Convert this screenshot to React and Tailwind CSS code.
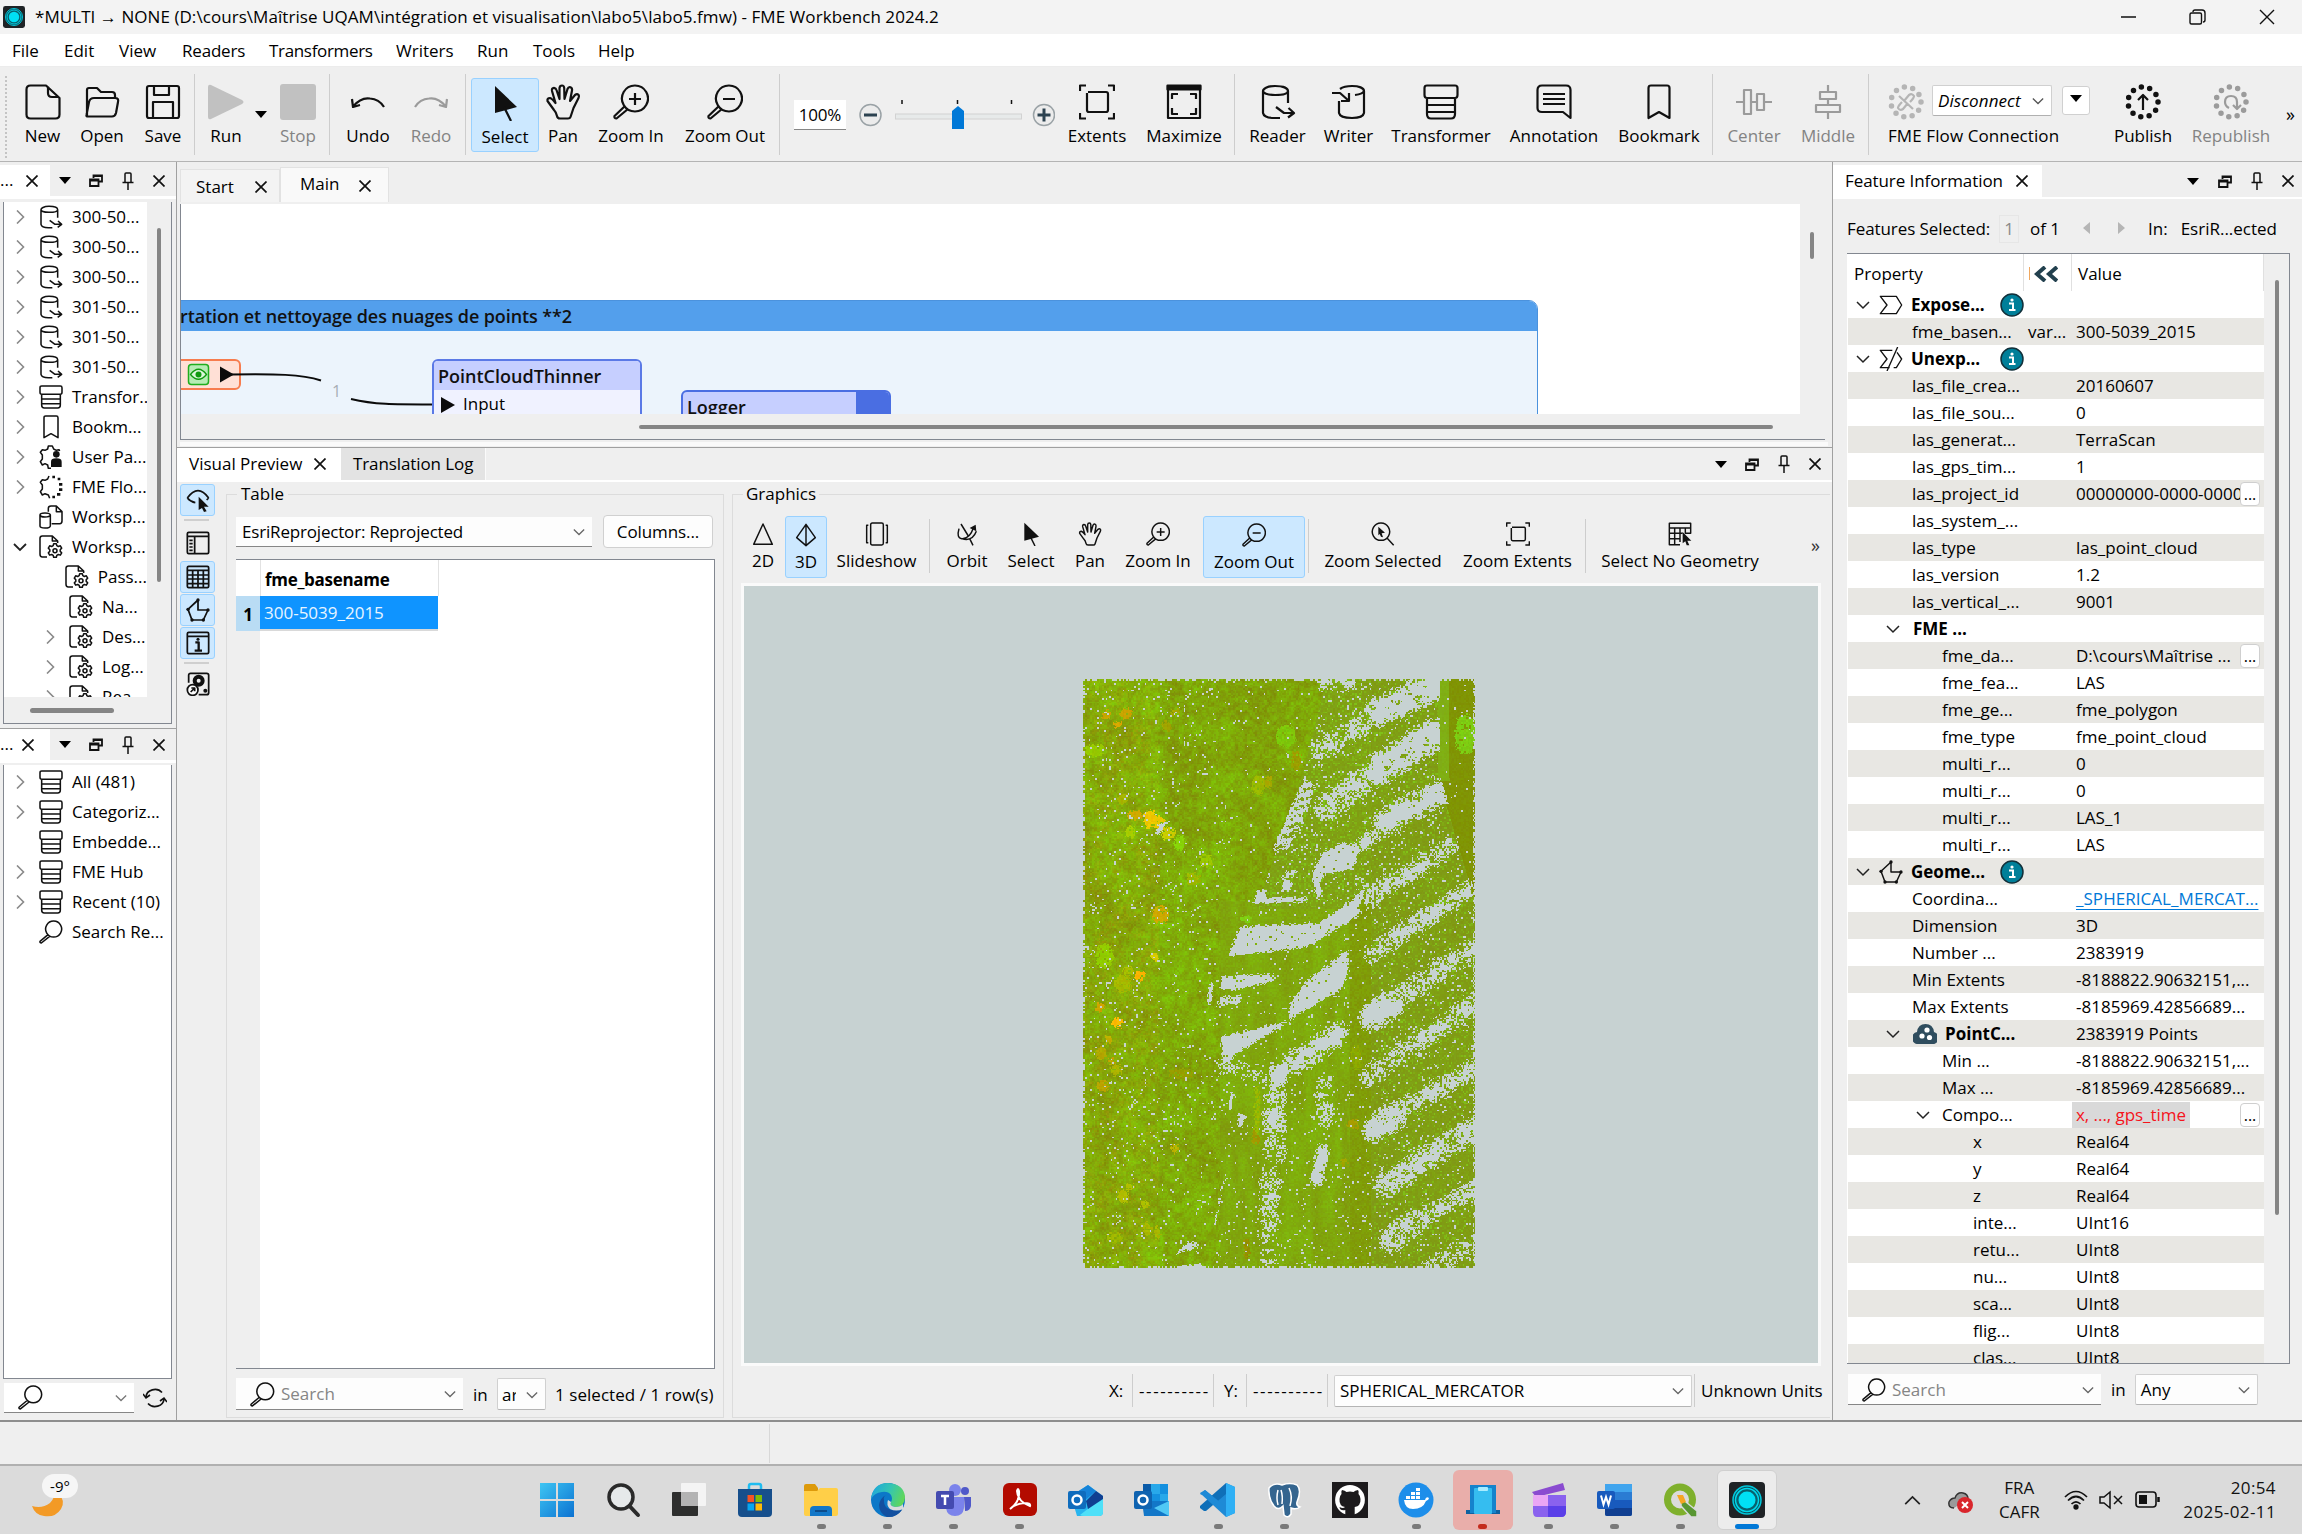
import React, { useEffect, useRef } from "react";

/* ---------- icons ---------- */

const S = ({ size = 36, vb = 36, sw = 2.2, c = "#111", className = "", children }) => (
  <svg
    width={size}
    height={size}
    viewBox={`0 0 ${vb} ${vb}`}
    fill="none"
    stroke={c}
    strokeWidth={sw}
    strokeLinejoin="round"
    strokeLinecap="butt"
    className={"shrink-0 " + className}
  >
    {children}
  </svg>
);

const shapes = {
  new: <path d="M5.500 1.500H21L34.500 14V30.500Q34.500 34.500 30.500 34.500H5.500Q1.500 34.500 1.500 30.500V5.500Q1.500 1.500 5.500 1.500ZM23 2.500V9Q23 13 27 13H34M21 1.500L34.500 14" />,
  open: (
    <path d="M3 32V6Q3 4 5 4H13L17 8H28Q31 8 31 11V14M2.500 31L5 18Q6 14 10 14H31Q35 14 34 18L32 29Q31 32.500 28 32.500H4Q2 32.500 2.500 31Z" />
  ),
  save: <path d="M2 4Q2 2 4 2H32Q34 2 34 4V32Q34 34 32 34H4Q2 34 2 32ZM9 2V11H24V2M8 34V18H28V34" />,
  undo: <path d="M2 15L3 23L10 21M3 22.500Q11 13 20 14.500Q29 15 34 23" />,
  redo: <path d="M34 15L33 23L26 21M33 22.500Q25 13 16 14.500Q7 15 2 23" />,
  select: (
    <g>
      <path d="M8 1L30 22L8 28Z" fill="#111" stroke="none" />
      <path d="M17 22L24 36" />
    </g>
  ),
  pan: (
    <path d="M9 26L2.500 17Q2 14 5 14Q7 14.500 10.500 19L7 7Q6.500 4 9 3.800Q11 4 11.500 6L14.500 15L14.500 4Q14.800 1.500 17 1.500Q19 1.500 19.200 4L19.500 15L22.500 5Q23.500 2.500 25.500 3.200Q27.500 4 27 6.500L25 17L30 11Q32 9.500 33.500 10.800Q34.500 12 33.500 14L28.500 24L25.500 33Q25 34.500 23 34.500H15Q12.500 34.500 12 32Q11 28 9 26Z" />
  ),
  zoomin: (
    <path d="M22 1.500A13 13 0 1 1 21.900 1.500ZM22 9V21M16 15H28M12 22L1.500 32Q1 34.500 3.500 34.500L15 25" />
  ),
  zoomout: <path d="M22 1.500A13 13 0 1 1 21.900 1.500ZM16 15H28M12 22L1.500 32Q1 34.500 3.500 34.500L15 25" />,
  search: <path d="M22 1.500A12 12 0 1 1 21.900 1.500ZM13.500 22L1.500 32Q1 34.500 3.500 34.500L16 24.500" />,
  zoomsel: (
    <g>
      <path d="M15 1.500A13 13 0 1 1 14.900 1.500ZM24 24L34 35" />
      <path d="M11 7L21 16L16 17L18 23L15 22L13 18L11 20Z" fill="#111" stroke="none" />
    </g>
  ),
  extents: <path d="M1 7V1.500H7M29 1.500H35V7M35 29V34.500H29M7 34.500H1V29M9 8H27Q29 8 29 10V26Q29 28 27 28H10Q8 28 8 26V9" />,
  maximize: (
    <g>
      <path d="M2 2H34V34H2ZM6 15V10H12M24 10H30V15M30 24V30H24M12 30H6V24" />
      <path d="M1.500 1.500H34.500V5.500H1.500Z" fill="#111" />
    </g>
  ),
  reader: (
    <g>
      <path d="M15 2C23 2 28 4 28 7S23 11 15 11S3 9 3 7S7 2 15 2ZM3 7V29Q4 34 14 34H20M28 7V19M16 23L24 29H34M28.500 24L34 29L28 33.500" />
    </g>
  ),
  writer: (
    <g>
      <path d="M33 7C33 4 28 2 21 2Q13 2 9 5M33 7V29Q32 34 21 34Q9 34 8 29V17M33 7Q32 10 24 11M1 9H9L18 17M10 17H18V9" />
    </g>
  ),
  transformer: (
    <path d="M4 1.500H32Q34.500 1.500 34.500 4V11Q34.500 14 32 14H4Q1.500 14 1.500 11V4Q1.500 1.500 4 1.500ZM4 14V30Q4 34.500 8 34.500H28Q32 34.500 32 30V14M4 21H32M4 28H32" />
  ),
  annotation: (
    <path d="M6 1.500H30Q34.500 1.500 34.500 6V34L27 28H6Q1.500 28 1.500 24V6Q1.500 1.500 6 1.500ZM7 10H29M7 15H29M7 20H29" />
  ),
  bookmark: <path d="M10 1.500H26Q28.500 1.500 28.500 4V34L18 28L7.500 34V4Q7.500 1.500 10 1.500Z" />,
  center: <path d="M0 18H8M15 18H21M28 18H36M8 6H15V30H8ZM21 10H28V26H21Z" />,
  middle: <path d="M18 1V8M18 15V21M18 28V35M10 8H26V15H10ZM6 21H30V28H6Z" />,
  dotsUp: (
    <g>
      <circle cx="18" cy="18" r="15" strokeWidth="5.500" strokeDasharray="0 8.567" strokeLinecap="round" />
      <path d="M18 26V11M13 16L18 11L23 16" />
    </g>
  ),
  dotsRe: (
    <g>
      <circle cx="18" cy="18" r="15" strokeWidth="5.500" strokeDasharray="0 8.567" strokeLinecap="round" />
      <path d="M16 24Q12 22 12 18Q12 12 18 12Q24 12 24 18V24M20 21L24 25L28 21" />
    </g>
  ),
  dotsLink: (
    <g>
      <circle cx="18" cy="18" r="15" strokeWidth="5.500" strokeDasharray="0 8.567" strokeLinecap="round" />
      <path d="M16 17L21 11Q24 9 26 12Q26 14 22 18M20 19L15 25Q12 27 10 24Q10 22 14 18M11 12L25 25" />
    </g>
  ),
  user: (
    <g>
      <path d="M18 35H14L13 30L9 28L5 30L2 25L5 21V15L2 11L5 7L9 8L13 6L14 1.500H20L22 6L26 8L30 7L31 9" />
      <circle cx="26" cy="14" r="5" fill="#111" stroke="none" />
      <path d="M18 33V25Q18 20 26 20Q34 20 34 25V33Z" fill="#111" stroke="none" />
    </g>
  ),
  flow: (
    <g>
      <path d="M16 35L14 30L9 28L5 30L2 25L5 21V15L2 11L5 7L9 8L13 6L15 1.500" />
      <path d="M20 3h4M28 6h4M30 14h5M30 22h5M27 29h5M20 33h4" strokeWidth="4" />
    </g>
  ),
  wres: (
    <path d="M14 10V5Q14 1.500 18 1.500H26L34.500 10V24Q34.500 28 31 28H19M26 2V10H34M1.500 15Q1.500 12 9 12T17 15V31Q17 34.500 9 34.500T1.500 31ZM1.500 15Q2 18 9 18T17 15" />
  ),
  wparam: (
    <g>
      <path d="M12 33H5Q1.500 33 1.500 29V5Q1.500 1.500 5 1.500H20L28 9V12M20 2V9H28" />
      <path d="M22 13h4l.7 3 2.300 1.200 3-1 2 3.500-2.200 2.300v2.500l2.200 2.200-2 3.500-3-1-2.300 1.300-.7 3h-4l-.7-3-2.300-1.300-3 1-2-3.500 2.200-2.200v-2.500L14 19.700l2-3.500 3 1 2.300-1.200Z" />
      <circle cx="24" cy="23.500" r="3" />
    </g>
  ),
  tri: <path d="M18 3L32 33.500H4Z" />,
  tetra: <path d="M18 2L32 22L18 34L4 22ZM18 2V34" />,
  slides: <path d="M11 1.500H25Q27.500 1.500 27.500 4V32Q27.500 34.500 25 34.500H11Q8.500 34.500 8.500 32V4Q8.500 1.500 11 1.500ZM5 5H2.500V31H5M31 5H33.500V31H31" />,
  orbit: (
    <g>
      <path d="M9 3L20 21M22 25L27 35M6 10Q2 24 10 25Q22 26 28 8M10 25Q26 30 32 14" />
      <path d="M22 9L31 4L32 14Z" fill="#111" stroke="none" />
    </g>
  ),
  nogeo: (
    <g>
      <path d="M2 2H34V9H2ZM2 9V34H18M2 17H22M2 25H18M10 9V34M18 9V30M26 9V17H34V9" />
      <path d="M22 15L35 28L29 28L32 35L28 35L26 29L22 32Z" fill="#111" stroke="none" />
    </g>
  ),
  eyeptr: (
    <g>
      <path d="M2 15Q10 4 18 4T34 15M2 15Q7 21 14 22M34 15L31 18" />
      <path d="M19 13L34 28L27 28L31 35L27 36L24 30L19 33Z" fill="#111" stroke="none" />
    </g>
  ),
  listwin: (
    <g>
      <path d="M4 2H32Q34 2 34 4V32Q34 34 32 34H4Q2 34 2 32V4Q2 2 4 2ZM2 8H34M13 8V34" />
      <path d="M5 14h5M5 19h5M5 24h5M5 29h5" />
    </g>
  ),
  grid: <path d="M4 2H32Q34 2 34 4V32Q34 34 32 34H4Q2 34 2 32V4Q2 2 4 2ZM2 8H34M2 15H34M2 21H34M2 28H34M10 8V34M18 8V34M26 8V34" />,
  geom: (
    <g>
      <path d="M18 3V18H33L26 33H9L3 17Z" />
      <g fill="#111" stroke="none">
        <circle cx="18" cy="3" r="2.500" />
        <circle cx="33" cy="18" r="2.500" />
        <circle cx="26" cy="33" r="2.500" />
        <circle cx="9" cy="33" r="2.500" />
        <circle cx="3" cy="17" r="2.500" />
      </g>
    </g>
  ),
  infowin: (
    <g>
      <path d="M4 2H32Q34 2 34 4V32Q34 34 32 34H4Q2 34 2 32V4Q2 2 4 2ZM2 8H34" />
      <path d="M14 17H19V29M13 29.500H24" strokeWidth="3.500" />
      <circle cx="18" cy="12.500" r="2.300" fill="#111" stroke="none" />
    </g>
  ),
  record: (
    <g>
      <path d="M4 16V5Q4 2 7 2H31Q34 2 34 5V31Q34 34 31 34H19" />
      <circle cx="19" cy="13" r="6" strokeWidth="6" />
      <circle cx="29" cy="28" r="3" fill="#111" stroke="none" />
      <circle cx="10" cy="27" r="8" fill="#fff" />
      <path d="M7 30L13 24M8 24H13V29" />
    </g>
  ),
  attr: <path d="M2 5H26L34 18L26 31H2L12 18Z" strokeWidth="2" />,
  unattr: <path d="M16 31H2L12 18L2 5H20M27 8L34 18L26 31H22M28 0L12 36" strokeWidth="2" />,
};

const Icon = ({ n, size = 36, c, sw, className }) => (
  <S size={size} c={c} sw={sw} className={className}>
    {shapes[n]}
  </S>
);

const Chev = ({ dir = "down", c = "#555", size = 14, sw = 1.5 }) => (
  <svg width={size} height={size} viewBox="0 0 14 14" fill="none" stroke={c} strokeWidth={sw} className="shrink-0">
    <path d={dir === "down" ? "M1 4L7 10L13 4" : dir === "up" ? "M1 10L7 4L13 10" : "M4 0.500L10.500 7L4 13.500"} />
  </svg>
);
const X = ({ size = 13, sw = 1.7 }) => (
  <svg width={size} height={size} viewBox="0 0 12 12" stroke="#111" strokeWidth={sw} className="shrink-0">
    <path d="M0.500 0.500L11.500 11.500M11.500 0.500L0.500 11.500" />
  </svg>
);
const Caret = () => (
  <svg width="12" height="7" viewBox="0 0 12 7" className="shrink-0">
    <path d="M0 0H12L6 7Z" fill="#000" />
  </svg>
);
const Float = () => (
  <svg width="14" height="13" viewBox="0 0 14 13" fill="none" stroke="#111" strokeWidth="1.800" className="shrink-0">
    <path d="M4.500 4V1.500H13V7.500H10M4 2H13M1 5.500H9.500V12H1ZM1 6.500H9.500" />
  </svg>
);
const Pin = () => (
  <svg width="12" height="18" viewBox="0 0 12 18" fill="none" stroke="#111" strokeWidth="1.500" className="shrink-0">
    <path d="M3 10V2Q3 1 4 1H8Q9 1 9 2V10M0.500 10.500H11.500M6 10.500V18" />
  </svg>
);
const InfoDot = () => (
  <svg width="24" height="24" viewBox="0 0 24 24" className="shrink-0">
    <circle cx="12" cy="12" r="11" fill="#007f99" stroke="#12303a" strokeWidth="1.500" />
    <path d="M9 10.500H13V16.500M9 17H15.500" stroke="#fff" strokeWidth="2" fill="none" />
    <circle cx="12" cy="7" r="1.600" fill="#fff" />
  </svg>
);

/* ---------- title, menu and main toolbar ---------- */

const FmeLogo = ({ size }) => (
  <svg width={size} height={size} viewBox="0 0 36 36" className="shrink-0">
    <rect width="36" height="36" rx="4" fill="#1f2326" />
    <circle cx="18" cy="18" r="14" fill="#0b4f5a" stroke="#00c8dc" strokeWidth="1.500" />
    <circle cx="18" cy="18" r="11.500" fill="#08616e" stroke="#00d8ec" strokeWidth="1.500" />
    <circle cx="18" cy="18" r="8.500" fill="#00e0f5" />
  </svg>
);

const Tool = ({ w, icon, label, off, size = 36, on }) => (
  <div
    className={
      "flex shrink-0 flex-col items-center whitespace-nowrap " +
      (size === 36 ? "gap-[4px] " : "gap-[3px] ") +
      (on ? "rounded-[3px] border border-[#99d1ff] bg-[#cce8ff] pt-[6px] " : "pt-[6px] ") +
      (off ? "text-[#838383] " : "text-black ") +
      w
    }
  >
    <Icon n={icon} size={size} c={off ? "#9b9b9b" : "#111"} />
    <span className="leading-[24px]">{label}</span>
  </div>
);
const Sep = ({ c = "", h = "h-[81px]" }) => <div className={"w-px shrink-0 bg-[#cdcdcd] " + h + " " + c} />;

const Toolbar = () => (
  <div className="flex h-[95px] items-start border-b border-[#b4b4b4] bg-[#efefef] pt-[11px] pl-[5px]">
    <div className="mt-[-2px] h-[82px] w-[2px] shrink-0 border-l-2 border-dotted border-[#c4c4c4]" />
    <Tool w="ml-[6px] w-[59px]" icon="new" label="New" />
    <Tool w="w-[60px]" icon="open" label="Open" />
    <Tool w="w-[62px]" icon="save" label="Save" />
    <Sep c="mt-[-4px]" />
    <div className="flex w-[62px] shrink-0 flex-col items-center gap-[4px] pt-[6px]">
      <svg width="36" height="36" viewBox="0 0 36 36">
        <path d="M0 3Q0 0 3 1L34 16Q37 18 34 20L3 35Q0 36 0 33Z" fill="#c1c1c1" />
      </svg>
      <span className="leading-[24px]">Run</span>
    </div>
    <div className="mt-[25px] ml-[-2px] w-[12px] shrink-0 pt-[8px]">
      <Caret />
    </div>
    <div className="flex w-[62px] shrink-0 flex-col items-center gap-[4px] pt-[6px] text-[#838383]">
      <div className="size-[36px] rounded-[3px] bg-[#c1c1c1]" />
      <span className="leading-[24px]">Stop</span>
    </div>
    <Sep c="mt-[-4px]" />
    <Tool w="ml-[7px] w-[62px]" icon="undo" label="Undo" />
    <Tool w="w-[64px]" icon="redo" label="Redo" off />
    <Sep c="mt-[-4px] ml-[2px]" />
    <Tool w="ml-[5px] w-[68px] h-[74px]" icon="select" label="Select" on />
    <Tool w="w-[48px]" icon="pan" label="Pan" />
    <Tool w="w-[88px]" icon="zoomin" label="Zoom In" />
    <Tool w="w-[100px]" icon="zoomout" label="Zoom Out" />
    <Sep c="mt-[-4px] ml-[4px]" />
    <div className="mt-[22px] ml-[14px] flex h-[30px] w-[52px] shrink-0 items-center justify-center border-b border-[#868686] bg-white tracking-[-0.2px]">
      100%
    </div>
    <svg width="196" height="40" viewBox="0 0 196 40" className="mt-[17px] ml-[13px] shrink-0">
      <circle cx="11.500" cy="20" r="10.500" fill="#ececec" stroke="#9aa2a6" strokeWidth="1.500" />
      <path d="M5 20H18" stroke="#2c4250" strokeWidth="3" />
      <rect x="36.500" y="19" width="126" height="5" fill="#e7eaea" stroke="#d2d2d2" />
      <path d="M43 5V9M98.500 5V9M152.500 5V9" stroke="#111" strokeWidth="1.500" />
      <path d="M93 34V16L99 11L105 16V34Z" fill="#0078d7" />
      <circle cx="185" cy="20" r="10.500" fill="#ececec" stroke="#9aa2a6" strokeWidth="1.500" />
      <path d="M178.500 20H191.500M185 13.500V26.500" stroke="#2c4250" strokeWidth="3" />
    </svg>
    <Tool w="ml-[1px] w-[82px]" icon="extents" label="Extents" />
    <Tool w="w-[92px]" icon="maximize" label="Maximize" />
    <Sep c="mt-[-4px] ml-[4px]" />
    <Tool w="ml-[7px] w-[71px]" icon="reader" label="Reader" />
    <Tool w="w-[71px]" icon="writer" label="Writer" />
    <Tool w="w-[114px]" icon="transformer" label="Transformer" />
    <Tool w="w-[112px]" icon="annotation" label="Annotation" />
    <Tool w="w-[98px]" icon="bookmark" label="Bookmark" />
    <Sep c="mt-[-4px] ml-[4px]" />
    <Tool w="ml-[4px] w-[74px]" icon="center" label="Center" off />
    <Tool w="w-[74px]" icon="middle" label="Middle" off />
    <Sep c="mt-[-4px] ml-[3px]" />
    <div className="ml-[19px] w-[204px] shrink-0 pt-[6px]">
      <div className="flex h-[36px] items-center">
        <Icon n="dotsLink" c="#b5b5b5" />
        <div className="mt-[-3px] ml-[8px] flex h-[31px] w-[120px] items-center justify-between rounded-[2px] border border-[#d0d0d0] border-b-[#b0b0b0] bg-white pr-[7px] pl-[5px] tracking-[0.1px] italic">
          Disconnect
          <Chev size={12} />
        </div>
        <div className="mt-[-3px] ml-[10px] flex h-[29px] w-[28px] items-center justify-center rounded-[3px] border border-[#d0d0d0] bg-white pb-[4px]">
          <Caret />
        </div>
      </div>
      <div className="mt-[4px] leading-[24px] tracking-[0.1px]">FME Flow Connection</div>
    </div>
    <Tool w="ml-[9px] w-[84px]" icon="dotsUp" label="Publish" />
    <Tool w="w-[92px]" icon="dotsRe" label="Republish" off />
    <div className="mt-[24px] ml-[9px] w-[12px] shrink-0 text-[18px] leading-[24px]">»</div>
  </div>
);

/* ---------- shared dock parts ---------- */

const Dot3 = ({ className = "" }) => <span className={"leading-none " + className}>...</span>;

const NarrowHead = ({ pad }) => (
  <div className="flex h-[34px] items-stretch border-b-[3px] border-white bg-[#efefef]">
    <div className="flex w-[50px] items-center bg-white">
      <Dot3 className="pb-[2px]" />
      <div className={pad}>
        <X size={12} />
      </div>
    </div>
    <div className="flex w-[30px] items-center justify-center"><Caret /></div>
    <div className="flex w-[31px] items-center justify-center"><Float /></div>
    <div className="flex w-[34px] items-center justify-center"><Pin /></div>
    <div className="flex w-[27px] items-center justify-center"><X size={12} /></div>
  </div>
);

const TreeRow = ({ open, chev, icon, label, sub }) => (
  <div className={"flex h-[30px] shrink-0 items-center whitespace-nowrap " + (sub ? "pl-[39px]" : "pl-[9px]")}>
    <div className="flex w-[14px] justify-center">
      {chev && <Chev dir={open ? "down" : "right"} c={open ? "#222" : "#8a8a8a"} size={14} sw={open ? 1.8 : 1.6} />}
    </div>
    <Icon n={icon} size={24} className="ml-[12px]" sw={2.3} />
    <span className="ml-[9px]">{label}</span>
  </div>
);

const navRows = [
  ["reader", "300-50...", 1], ["reader", "300-50...", 1], ["reader", "300-50...", 1],
  ["reader", "301-50...", 1], ["reader", "301-50...", 1], ["reader", "301-50...", 1],
  ["transformer", "Transfor...", 1], ["bookmark", "Bookm...", 1], ["user", "User Pa...", 1],
  ["flow", "FME Flo...", 1], ["wres", "Worksp...", 0], ["wparam", "Worksp...", 2],
];
const subRows = [["Pass...", 0], ["Na...", 0], ["Des...", 1], ["Log...", 1], ["Rea...", 1]];

const LeftDock = () => (
  <div className="flex w-[176px] shrink-0 flex-col bg-[#efefef] pt-[3px]">
    <NarrowHead pad="ml-[13px]" />
    <div className="mx-[3px] mt-[3px] flex h-[522px] w-[169px] flex-col border border-t-0 border-[#828790]">
      <div className="flex h-[495px]">
        <div className="flex w-[143px] flex-col overflow-hidden bg-white">
          {navRows.map(([i, l, c], k) => (
            <TreeRow key={k} icon={i} label={l} chev={c > 0} open={c === 2} />
          ))}
          {subRows.map(([l, c], k) => (
            <TreeRow key={k} icon="wparam" label={l} chev={c > 0} sub />
          ))}
        </div>
        <div className="mt-[26px] ml-[10px] h-[354px] w-[4px] rounded-full bg-[#858585]" />
      </div>
      <div className="mt-[11px] ml-[26px] h-[5px] w-[84px] rounded-full bg-[#858585]" />
    </div>
    <div className="mt-[4px] h-px bg-[#a0a0a0]" />
    <NarrowHead pad="ml-[9px]" />
    <div className="mx-[3px] mt-[2px] flex h-[614px] w-[169px] flex-col border border-t-0 border-[#828790] bg-white pt-[2px]">
      <TreeRow icon="transformer" label="All (481)" chev />
      <TreeRow icon="transformer" label="Categoriz..." chev />
      <TreeRow icon="transformer" label="Embedde..." />
      <TreeRow icon="transformer" label="FME Hub" chev />
      <TreeRow icon="transformer" label="Recent (10)" chev />
      <TreeRow icon="search" label="Search Re..." />
    </div>
    <div className="mt-[4px] flex items-center pl-[4px]">
      <div className="flex h-[30px] w-[130px] items-center justify-between border-b border-[#868686] bg-white pr-[7px] pl-[14px]">
        <Icon n="search" size={25} />
        <Chev size={12} c="#777" />
      </div>
      <svg width="24" height="22" viewBox="0 0 24 22" fill="none" stroke="#111" strokeWidth="1.600" className="ml-[9px]">
        <path d="M3 10A9 8 0 0 1 19 5.500M21 12A9 8 0 0 1 5 16.500M0 7L3 11L7 8M24 15L21 11L17 14" />
      </svg>
    </div>
  </div>
);

/* ---------- workspace canvas ---------- */

const Workspace = () => (
  <div className="flex h-[283px] flex-col bg-[#efefef] pl-[3px]">
    <div className="flex h-[38px] shrink-0 items-end">
      <div className="flex h-[33px] w-[100px] items-center border border-b-0 border-[#e2e2e2] bg-[#f3f3f3] pt-[1px] pl-[15px]">
        Start
        <div className="ml-[21px]"><X size={12} /></div>
      </div>
      <div className="flex h-[35px] w-[109px] items-center border border-b-0 border-[#e2e2e2] bg-[#f9f9f9] pb-[2px] pl-[19px]">
        Main
        <div className="mt-[3px] ml-[20px]"><X size={12} /></div>
      </div>
    </div>
    <div className="mt-[2px] h-[236px] w-[1645px] shrink-0 border-b border-l border-[#828790]">
      <div className="flex">
        <div className="relative h-[210px] w-[1619px] overflow-hidden bg-white">
          <div className="absolute top-[96px] -left-[20px] h-[140px] w-[1377px] rounded-tr-[9px] border border-[#4b92dd] bg-[#ecf4fc]">
            <div className="flex h-[30px] items-center rounded-tr-[8px] bg-[#539fec] pl-[18px] text-[18px] font-semibold tracking-[-0.1px] whitespace-nowrap text-[#111]">
              rtation et nettoyage des nuages de points **2
            </div>
          </div>
          <div className="absolute top-[155px] -left-[10px] h-[31px] w-[70px] rounded-[6px] border-2 border-[#f77c4e] bg-[#ffe0d6]" />
          <svg width="640" height="60" viewBox="0 0 640 60" className="absolute top-[150px] left-0">
            <rect x="7.500" y="10.500" width="20" height="20" rx="3" fill="#b6ecb4" stroke="#1fae1f" strokeWidth="1.500" />
            <path d="M9.500 20.500Q17.500 10 25.500 20.500Q17.500 30 9.500 20.500Z" fill="#fff" fillOpacity=".5" stroke="#0f9a0f" strokeWidth="1.300" />
            <circle cx="17.500" cy="20.500" r="3" fill="#0f9a0f" />
            <path d="M39 12.500L53 20.500L39 28.500Z" fill="#0b0b0b" />
            <path d="M50 20.500C95 20 120 20 140 26.500M170 45C195 51 215 50.500 262 50.500" stroke="#0b0b0b" strokeWidth="2" fill="none" />
          </svg>
          <div className="absolute top-[175px] left-[151px] text-[16px] text-[#a7adb5]">1</div>
          <div className="absolute top-[155px] left-[251px] h-[80px] w-[210px] overflow-hidden rounded-t-[6px] border-2 border-[#5b79e6] bg-[#f0f2ff]">
            <div className="flex h-[29px] items-center bg-[#c6cfff] pl-[4px] text-[18px] font-semibold text-[#111]">
              PointCloudThinner
            </div>
            <div className="flex h-[28px] items-center pl-[29px]">Input</div>
          </div>
          <svg width="14" height="18" viewBox="0 0 14 18" className="absolute top-[192px] left-[260px]">
            <path d="M0 1L14 9L0 17Z" fill="#0b0b0b" />
          </svg>
          <div className="absolute top-[186px] left-[500px] flex h-[50px] w-[210px] overflow-hidden rounded-t-[6px] border-2 border-[#4a6ee2] bg-[#c6cfff]">
            <div className="w-[173px] pt-[2px] pl-[4px] text-[18px] leading-[26px] font-semibold text-[#111]">Logger</div>
            <div className="h-full flex-1 bg-[#4a6ee2]" />
          </div>
        </div>
        <div className="mt-[28px] ml-[10px] h-[27px] w-[4px] rounded-full bg-[#858585]" />
      </div>
      <div className="mt-[11px] ml-[458px] h-[4px] w-[1134px] rounded-full bg-[#858585]" />
    </div>
    <div className="mt-[2px] mr-[4px] h-[4px] bg-[#fafafa]" />
  </div>
);

/* ---------- point cloud ---------- */

const CLOUD_W = 392;
const CLOUD_H = 589;
// [x1, y1, x2, y2, width, gap density]
const swaths = [
  [775, 225, 960, 135, 44, 0.55], [950, 130, 1140, 60, 58, 0.85],
  [800, 365, 980, 260, 58, 0.55], [960, 270, 1120, 185, 66, 0.8],
  [890, 465, 1010, 405, 28, 0.55], [980, 400, 1140, 330, 55, 0.75],
  [930, 590, 1170, 465, 42, 0.5], [932, 730, 1235, 570, 40, 0.52],
  [932, 890, 1000, 855, 55, 0.9], [1000, 850, 1246, 715, 44, 0.52],
  [928, 1035, 1246, 855, 44, 0.5], [945, 1165, 1005, 1135, 58, 0.8],
  [1000, 1130, 1246, 1015, 40, 0.52], [972, 1310, 1246, 1165, 50, 0.55],
  [992, 1445, 1090, 1385, 52, 0.55], [1070, 1395, 1246, 1315, 34, 0.55],
  [1110, 1510, 1246, 1460, 44, 0.35],
  [705, 1005, 835, 930, 50, 0.7], [645, 1080, 648, 1220, 55, 0.42], [632, 1300, 630, 1395, 50, 0.5],
  [625, 1400, 630, 1490, 45, 0.25], [798, 1060, 800, 1135, 48, 0.38], [790, 1222, 772, 1290, 32, 0.85],
  [517, 1080, 512, 1115, 8, 0.8], [490, 1300, 465, 1410, 6, 0.4], [790, 58, 870, 60, 30, 0.5],
  [905, 560, 935, 590, 30, 0.5], [490, 1010, 630, 1035, 35, 0.25], [455, 810, 450, 850, 12, 0.7],
];
const gaps = [
  [738, 290, 770, 318, 688, 470, 638, 473],
  [762, 520, 790, 480, 850, 452, 900, 470, 880, 522, 800, 532, 778, 560, 788, 590, 772, 588, 758, 550],
  [600, 570, 618, 570, 618, 592, 745, 590, 740, 600, 578, 606],
  [672, 545, 695, 545, 695, 575, 672, 575], [680, 525, 715, 525, 700, 538, 680, 538],
  [540, 665, 650, 658, 780, 655, 880, 595, 920, 565, 893, 640, 740, 715, 505, 738],
  [485, 788, 645, 780, 645, 798, 530, 820, 482, 818],
  [480, 838, 545, 835, 545, 852, 475, 860],
  [690, 855, 740, 800, 865, 720, 862, 790, 840, 822, 690, 895],
  [483, 938, 690, 897, 520, 985, 515, 1005, 490, 1005],
  [632, 1010, 690, 1005, 680, 1050, 632, 1075],
  [345, 1477, 395, 1445, 412, 1450, 410, 1465], [535, 1130, 562, 1130, 545, 1160, 535, 1160],
  [355, 1508, 430, 1503, 435, 1530, 355, 1530], [285, 430, 310, 402, 318, 410, 296, 438],
];
// [cx, cy, rx, ry, r, g, b]
const roofs = [
  [225, 385, 22, 12, 205, 170, 0], [270, 395, 19, 22, 238, 200, 0], [297, 405, 20, 16, 232, 200, 0], [326, 430, 20, 16, 200, 205, 0],
  [302, 634, 24, 22, 205, 170, 0], [140, 137, 14, 13, 200, 165, 0], [198, 133, 17, 13, 200, 165, 0], [172, 160, 12, 8, 215, 170, 0],
  [284, 738, 12, 10, 215, 205, 0], [240, 785, 15, 12, 248, 180, 0], [173, 902, 16, 12, 250, 185, 0], [205, 772, 14, 10, 170, 190, 0],
  [190, 805, 24, 22, 165, 185, 0], [122, 866, 13, 12, 205, 165, 0], [125, 980, 16, 16, 175, 170, 0], [155, 1000, 12, 8, 190, 165, 0],
  [172, 1020, 17, 14, 170, 180, 0], [130, 1060, 17, 14, 185, 165, 0], [213, 428, 14, 14, 168, 205, 0], [190, 1335, 15, 16, 175, 190, 0],
  [210, 1312, 12, 10, 175, 190, 0], [255, 1355, 13, 10, 175, 190, 0], [262, 1415, 14, 16, 168, 185, 0], [293, 1425, 11, 16, 168, 185, 0],
  [346, 1215, 11, 12, 185, 180, 0], [880, 1155, 18, 12, 165, 160, 0], [855, 1252, 11, 11, 160, 165, 0], [105, 225, 28, 16, 150, 205, 0],
  [592, 1120, 8, 60, 155, 185, 0], [588, 1185, 10, 22, 160, 155, 0], [595, 310, 18, 26, 155, 185, 0], [625, 305, 12, 14, 165, 170, 0],
  [710, 250, 14, 26, 155, 160, 0], [400, 545, 20, 14, 158, 185, 0], [440, 500, 20, 16, 155, 200, 0], [135, 735, 26, 30, 145, 205, 0],
  [360, 455, 16, 20, 135, 212, 8], [350, 130, 14, 9, 165, 165, 0], [320, 165, 12, 14, 160, 165, 0], [165, 1437, 22, 12, 160, 185, 0],
  [562, 1465, 9, 25, 150, 145, 0], [147, 945, 12, 10, 190, 175, 0], [190, 345, 14, 12, 165, 180, 0], [365, 1030, 36, 14, 150, 160, 0],
  [1217, 185, 30, 50, 125, 205, 18], [680, 190, 28, 26, 126, 200, 10], [560, 645, 16, 10, 125, 208, 18], [890, 990, 16, 30, 140, 170, 0],
];

const hash = (x, y, s) => {
  let h = (Math.imul(x | 0, 374761393) + Math.imul(y | 0, 668265263) + Math.imul(s, 1274126177)) | 0;
  h = Math.imul(h ^ (h >>> 13), 1103515245);
  h ^= h >>> 16;
  return (h >>> 0) / 4294967296;
};
const smooth = (x, y, s) => {
  const xi = Math.floor(x), yi = Math.floor(y);
  const fx = x - xi, fy = y - yi;
  const a = hash(xi, yi, s), b = hash(xi + 1, yi, s), c = hash(xi, yi + 1, s), d = hash(xi + 1, yi + 1, s);
  const u = fx * fx * (3 - 2 * fx), v = fy * fy * (3 - 2 * fy);
  return (a * (1 - u) + b * u) * (1 - v) + (c * (1 - u) + d * u) * v;
};
const inside = (p, x, y) => {
  let r = false;
  for (let i = 0, j = p.length - 2; i < p.length; j = i, i += 2) {
    if (p[i + 1] > y !== p[j + 1] > y && x < ((p[j] - p[i]) * (y - p[i + 1])) / (p[j + 1] - p[i + 1]) + p[i]) r = !r;
  }
  return r;
};
const slabEast = (y) => (y < 290 ? 1135 : y < 590 ? 1135 + (y - 290) * 0.36 : 1300);
const fieldWest = (y) => (y < 290 ? 800 - (y - 50) * 0.3 : y < 900 ? 728 - (y - 290) * 0.42 : 480);

const cloudPixel = (px, py) => {
  const cx = Math.floor(px / 1.7), cy = Math.floor(py / 1.7);
  const x = (px + 24) * 3, y = (py + 19.3) * 2.489;
  const n = hash(cx, cy, 1), n2 = hash(cx, cy, 2);
  const wx = x + (n - 0.5) * 10, wy = y + (n2 - 0.5) * 8;
  const edge = Math.min(px, py, CLOUD_W - 1 - px, CLOUD_H - 1 - py);
  if (edge < 2 && n2 < 0.4) return null;
  const east = x > 935 && x < slabEast(y);
  const mid = x > fieldWest(y) && x < slabEast(y);
  for (const g of gaps) if (inside(g, wx, wy)) {
    if (g === gaps[0] && (wy * 1.1 + wx * 0.3) % 22 < 8 && wx + wy * 0.55 > 905 && n < 0.8) break;
    if (n2 > 0.04) return null;
  }
  if (x < slabEast(y) + 8) {
    const rag = smooth(x / 20, y / 15, 12) - 0.5 + (smooth(x / 9, y / 7, 13) - 0.5) * 0.5;
    for (const s of swaths) {
      const dx = s[2] - s[0], dy = s[3] - s[1];
      const t = Math.max(0, Math.min(1, ((x - s[0]) * dx + (y - s[1]) * dy) / (dx * dx + dy * dy)));
      const d = Math.hypot(x - s[0] - dx * t, y - s[1] - dy * t) / (s[4] * 0.62);
      if (d < 1.4 && n < s[5] * 1.35 * (1 - d * d * 0.7) + rag * 0.75 * (1.4 - d)) return null;
    }
  }
  const sparse = east ? 0.05 : mid && y < 560 ? 0.06 : mid ? 0.03 : x < 480 ? 0.032 : 0.012;
  if (hash(cx, cy, 5) < sparse * (0.4 + 1.4 * smooth(x / 45, y / 45, 9))) return null;
  for (const r of roofs) {
    const d = Math.abs((wx - r[0]) / r[2]) ** 2.5 + Math.abs((wy - r[1]) / r[3]) ** 2.5;
    if (d < 1 && n < 0.9) return [r[4] + n2 * 14 - 7, r[5] + n * 20 - 10, r[6]];
  }
  const big = smooth(x / 70 + 4, y / 60, 3), fine = smooth(x / 14, y / 12, 4);
  let t = 0.34 * big + 0.42 * fine + 0.36 * n - 0.16;
  let r = 128, b = 4;
  if (x > slabEast(y)) {
    t = x < slabEast(y) + 34 && y < 300 ? 0.42 + n * 0.1 : 0.04 + n * 0.14;
    b = t > 0.4 ? 16 : 0;
  } else if (east) {
    t = 0.1 + (n > 0.78 ? 0.6 * n2 : n * 0.2) + 0.08 * big;
    b = 16;
  } else if (x > 870 && x < 935 && y > 590) {
    t = 0.1 + n * 0.24;
  } else if (mid && y < 620) {
    t = 0.18 + (n > 0.65 ? 0.6 * n2 : n * 0.28);
    b = 16;
  } else if (x > 480 && y > 600) {
    t = 0.12 + 0.3 * smooth(x / 22, y / 90, 6) + n * 0.22;
    b = 8;
  } else if (x < 300) {
    r = 128 + 26 * smooth(x / 24, y / 22, 7) * hash(cx, cy, 8);
  }
  return [r, 140 + 74 * Math.max(0, t), b + 8 * n2];
};

const PointCloud = () => {
  const ref = useRef(null);
  useEffect(() => {
    const ctx = ref.current.getContext("2d");
    const img = ctx.createImageData(CLOUD_W, CLOUD_H);
    for (let y = 0; y < CLOUD_H; y++)
      for (let x = 0; x < CLOUD_W; x++) {
        const c = cloudPixel(x, y);
        if (!c) continue;
        const o = (y * CLOUD_W + x) * 4;
        img.data[o] = c[0];
        img.data[o + 1] = c[1];
        img.data[o + 2] = c[2];
        img.data[o + 3] = 255;
      }
    ctx.putImageData(img, 0, 0);
  }, []);
  return <canvas ref={ref} width={CLOUD_W} height={CLOUD_H} className="mt-[93px] ml-[339px] h-[589px] w-[392px]" />;
};

/* ---------- visual preview ---------- */

const Side = ({ n, on, c = "" }) => (
  <div
    className={
      "flex h-[32px] w-[35px] shrink-0 items-center justify-center rounded-[3px] border " +
      (on ? "border-[#99d1ff] bg-[#cce8ff] " : "border-transparent ") +
      c
    }
  >
    <Icon n={n} size={24} sw={2.6} />
  </div>
);

const Combo = ({ className = "", children, flat }) => (
  <div
    className={
      "flex shrink-0 items-center justify-between whitespace-nowrap bg-[#fdfdfd] " +
      (flat ? "border-b border-[#868686] " : "rounded-[2px] border border-[#d0d0d0] border-b-[#b4b4b4] ") +
      className
    }
  >
    {children}
    <Chev size={12} c="#666" />
  </div>
);

const TablePane = () => (
  <fieldset className="h-[936px] w-[498px] shrink-0 border border-[#dcdcdc] pl-[9px]">
    <legend className="ml-[1px] px-[4px] leading-[24px]">Table</legend>
    <div className="mt-[9px] flex h-[33px] items-center">
      <Combo flat className="h-[30px] w-[356px] pt-[1px] pr-[7px] pl-[6px] tracking-[-0.18px]">EsriReprojector: Reprojected</Combo>
      <div className="ml-[11px] flex h-[33px] w-[110px] items-center justify-center rounded-[4px] border border-[#d0d0d0] bg-[#fdfdfd] pt-[1px] tracking-[-0.1px]">Columns...</div>
    </div>
    <div className="mt-[11px] flex h-[810px] w-[479px] border border-l-0 border-[#828790] bg-white">
      <div className="w-[24px] bg-[#efefef]">
        <div className="h-[36px] bg-white" />
        <div className="flex h-[35px] items-center justify-center bg-[#b9dcf4] pt-[2px] font-bold">1</div>
      </div>
      <div className="w-[179px]">
        <div className="flex h-[36px] items-center border-r border-l border-[#e2e2e2] pt-[3px] pl-[4px] font-bold tracking-[-0.3px]">fme_basename</div>
        <div className="mr-[1px] flex h-[35px] items-center border-b-2 border-[#d9d9d9] bg-[#0f94ff] pl-[4px] text-[#e8f4ff]">300-5039_2015</div>
      </div>
    </div>
    <div className="mt-[9px] flex items-center">
      <Combo flat className="h-[32px] w-[227px] pt-[1px] pr-[7px] pl-[14px]">
        <Icon n="search" size={25} />
        <span className="mr-auto ml-[6px] text-[#858585]">Search</span>
      </Combo>
      <span className="ml-[10px] w-[15px] pt-[1px]">in</span>
      <Combo className="ml-[9px] h-[32px] w-[49px] pt-[1px] pr-[7px] pl-[4px]">
        <span className="w-[14px] overflow-hidden">ar</span>
      </Combo>
      <span className="ml-[9px] pt-[1px] tracking-[0.05px] whitespace-nowrap">1 selected / 1 row(s)</span>
    </div>
  </fieldset>
);

const GraphicsPane = () => (
  <fieldset className="ml-[8px] h-[936px] w-[1098px] min-w-0 shrink-0 border border-r-0 border-[#dcdcdc] pl-[8px]">
    <legend className="ml-[2px] px-[3px] leading-[24px]">Graphics</legend>
    <div className="mt-[10px] flex h-[62px] items-start">
      <Tool w="w-[44px]" size={24} icon="tri" label="2D" />
      <Tool w="h-[62px] w-[42px]" size={24} icon="tetra" label="3D" on />
      <Tool w="w-[99px]" size={24} icon="slides" label="Slideshow" />
      <Sep c="mt-[3px] ml-[3px]" h="h-[54px]" />
      <Tool w="ml-[7px] w-[60px]" size={24} icon="orbit" label="Orbit" />
      <Tool w="w-[68px]" size={24} icon="select" label="Select" />
      <Tool w="w-[50px]" size={24} icon="pan" label="Pan" />
      <Tool w="w-[86px]" size={24} icon="zoomin" label="Zoom In" />
      <Tool w="ml-[2px] h-[62px] w-[102px]" size={24} icon="zoomout" label="Zoom Out" on />
      <Sep c="mt-[3px] ml-[3px]" h="h-[54px]" />
      <Tool w="ml-[7px] w-[134px]" size={24} icon="zoomsel" label="Zoom Selected" />
      <Tool w="w-[135px]" size={24} icon="extents" label="Zoom Extents" />
      <Sep c="mt-[3px]" h="h-[54px]" />
      <Tool w="ml-[4px] w-[180px]" size={24} icon="nogeo" label="Select No Geometry" />
      <div className="mt-[17px] ml-[41px] text-[18px] leading-[24px] text-[#333]">»</div>
    </div>
    <div className="mt-[5px] h-[783px] w-[1080px] border-[3px] border-[#fafafa] bg-[#c7d2d2]">
      <PointCloud />
    </div>
    <div className="mt-[8px] flex h-[33px] items-center pl-[368px] whitespace-nowrap">
      <span className="w-[23px]">X:</span>
      <Sep h="h-[33px]" />
      <span className="w-[80px] pl-[6px] tracking-[1.600px]">----------</span>
      <Sep h="h-[33px]" />
      <span className="w-[32px] pl-[10px]">Y:</span>
      <Sep h="h-[33px]" />
      <span className="w-[80px] pl-[6px] tracking-[1.600px]">----------</span>
      <Sep h="h-[33px]" />
      <Combo className="ml-[6px] h-[32px] w-[358px] pt-[1px] pr-[7px] pl-[5px]">SPHERICAL_MERCATOR</Combo>
      <Sep h="h-[33px]" c="ml-[2px]" />
      <span className="ml-[6px]">Unknown Units</span>
    </div>
  </fieldset>
);

const Preview = () => (
  <div className="flex flex-col border-t border-[#a0a0a0] bg-[#efefef]">
    <div className="flex h-[34px] items-stretch border-b-2 border-white">
      <div className="flex w-[164px] items-center bg-white pl-[12px]">
        Visual Preview
        <div className="ml-[12px]"><X size={12} /></div>
      </div>
      <div className="flex w-[145px] items-center border-r border-[#fafafa] bg-[#e3e3e3] pl-[12px] tracking-[-0.1px]">Translation Log</div>
      <div className="ml-auto flex w-[31px] items-center justify-center"><Caret /></div>
      <div className="flex w-[32px] items-center justify-center"><Float /></div>
      <div className="flex w-[32px] items-center justify-center"><Pin /></div>
      <div className="mr-[2px] flex w-[30px] items-center justify-center"><X size={12} /></div>
    </div>
    <div className="flex h-[938px]">
      <div className="flex w-[49px] shrink-0 flex-col pt-[2px] pl-[3px]">
        <Side n="eyeptr" on />
        <div className="mt-[3px] ml-[4px] h-[2px] w-[25px] shrink-0 bg-[#cfcfcf]" />
        <Side n="listwin" c="mt-[6px]" />
        <Side n="grid" on c="mt-[2px]" />
        <Side n="geom" on c="mt-[1px]" />
        <Side n="infowin" on c="mt-[1px]" />
        <div className="mt-[3px] ml-[4px] h-[2px] w-[25px] shrink-0 bg-[#cfcfcf]" />
        <Side n="record" c="mt-[4px]" />
      </div>
      <TablePane />
      <GraphicsPane />
    </div>
  </div>
);

/* ---------- feature information ---------- */

const props = [
  { l: "Expose...", h: "attr" },
  { l: "fme_basen...", v: "300-5039_2015", t: "var..." },
  { l: "Unexp...", h: "unattr" },
  { l: "las_file_crea...", v: "20160607" },
  { l: "las_file_sou...", v: "0" },
  { l: "las_generat...", v: "TerraScan" },
  { l: "las_gps_tim...", v: "1" },
  { l: "las_project_id", v: "00000000-0000-0000", more: 1 },
  { l: "las_system_...", v: "" },
  { l: "las_type", v: "las_point_cloud" },
  { l: "las_version", v: "1.2" },
  { l: "las_vertical_...", v: "9001" },
  { l: "FME ...", d: 1, g: 1, v: "" },
  { l: "fme_da...", d: 1, v: "D:\\cours\\Maîtrise ...", more: 1 },
  { l: "fme_fea...", d: 1, v: "LAS" },
  { l: "fme_ge...", d: 1, v: "fme_polygon" },
  { l: "fme_type", d: 1, v: "fme_point_cloud" },
  { l: "multi_r...", d: 1, v: "0" },
  { l: "multi_r...", d: 1, v: "0" },
  { l: "multi_r...", d: 1, v: "LAS_1" },
  { l: "multi_r...", d: 1, v: "LAS" },
  { l: "Geome...", h: "geom" },
  { l: "Coordina...", v: "_SPHERICAL_MERCAT...", link: 1 },
  { l: "Dimension", v: "3D" },
  { l: "Number ...", v: "2383919" },
  { l: "Min Extents", v: "-8188822.90632151,..." },
  { l: "Max Extents", v: "-8185969.42856689..." },
  { l: "PointC...", pc: 1, v: "2383919 Points" },
  { l: "Min ...", d: 1, v: "-8188822.90632151,..." },
  { l: "Max ...", d: 1, v: "-8185969.42856689..." },
  { l: "Compo...", comp: 1, v: "x, ..., gps_time", more: 1 },
  { l: "x", d: 2, v: "Real64" },
  { l: "y", d: 2, v: "Real64" },
  { l: "z", d: 2, v: "Real64" },
  { l: "inte...", d: 2, v: "UInt16" },
  { l: "retu...", d: 2, v: "UInt8" },
  { l: "nu...", d: 2, v: "UInt8" },
  { l: "sca...", d: 2, v: "UInt8" },
  { l: "flig...", d: 2, v: "UInt8" },
  { l: "clas...", d: 2, v: "UInt8" },
];

const PropLabel = ({ p }) => {
  if (p.h)
    return (
      <div className="flex w-[223px] items-center pl-[8px] font-bold">
        <Chev c="#222" size={14} />
        <Icon n={p.h} size={24} className="ml-[9px]" />
        <span className="ml-[8px] w-[89px]">{p.l}</span>
        <InfoDot />
      </div>
    );
  if (p.pc)
    return (
      <div className="flex w-[223px] items-center pl-[38px] font-bold">
        <Chev c="#222" size={14} />
        <svg width="24" height="20" viewBox="0 0 24 20" className="ml-[13px]">
          <path d="M6 20A6 6 0 0 1 4 8Q5 0 12.500 0T21 8A6 6 0 0 1 18 20Z" fill="#2f4d5e" />
          <g fill="#fff">
            <circle cx="14" cy="6" r="2.600" />
            <circle cx="9" cy="12" r="2.600" />
            <circle cx="16.500" cy="13.500" r="2.600" />
          </g>
        </svg>
        <span className="ml-[8px]">{p.l}</span>
      </div>
    );
  if (p.g)
    return (
      <div className="flex w-[223px] items-center pl-[38px] font-bold">
        <Chev c="#222" size={14} />
        <span className="ml-[13px]">{p.l}</span>
      </div>
    );
  if (p.comp)
    return (
      <div className="flex w-[223px] items-center pl-[68px]">
        <Chev c="#222" size={14} />
        <span className="ml-[12px]">{p.l}</span>
      </div>
    );
  return (
    <div className={"flex w-[223px] items-center " + (p.d === 2 ? "pl-[125px]" : p.d === 1 ? "pl-[94px]" : "pl-[64px]")}>
      <span className={p.t ? "w-[116px]" : ""}>{p.l}</span>
      {p.t}
    </div>
  );
};

const RightDock = () => (
  <div className="flex w-[470px] shrink-0 flex-col border-l border-[#a0a0a0] bg-[#efefef] pt-[3px]">
    <div className="flex h-[34px] items-stretch border-b-2 border-white">
      <div className="flex w-[209px] items-center bg-white pl-[12px] tracking-[-0.08px]">
        Feature Information
        <div className="ml-[13px]"><X size={12} /></div>
      </div>
      <div className="ml-auto flex w-[32px] items-center justify-center"><Caret /></div>
      <div className="flex w-[32px] items-center justify-center"><Float /></div>
      <div className="flex w-[32px] items-center justify-center"><Pin /></div>
      <div className="flex w-[29px] items-center justify-center"><X size={12} /></div>
    </div>
    <div className="flex h-[54px] items-center pt-[5px] pl-[14px] whitespace-nowrap">
      <span className="w-[152px] tracking-[-0.08px]">Features Selected:</span>
      <span className="flex h-[28px] w-[20px] items-center justify-center border border-[#e6e6e6] text-[#8a8a8a]">1</span>
      <span className="ml-[11px] w-[53px]">of 1</span>
      <svg width="42" height="14" viewBox="0 0 42 14" className="mb-[2px]">
        <path d="M7 1L0 7L7 13ZM35 1L42 7L35 13Z" fill="#b5b5b5" />
      </svg>
      <span className="ml-[23px]">In:</span>
      <span className="ml-[13px]">EsriR...ected</span>
    </div>
    <div className="ml-[14px] flex h-[1111px] w-[443px] border border-l-0 border-[#828790]">
      <div className="w-[417px] overflow-hidden bg-white pl-[1px]">
        <div className="flex h-[37px] items-center">
          <div className="flex h-full w-[176px] items-center border-r border-[#e0e0e0] pt-[3px] pl-[6px]">Property</div>
          <div className="flex h-full w-[48px] items-center border-r border-[#e0e0e0] pt-[2px] pl-[5px]">
            <div className="h-[13px] w-px bg-[#f0a860]" />
            <svg width="24" height="16" viewBox="0 0 24 16" fill="none" stroke="#22404e" strokeWidth="4" className="ml-[4px]">
              <path d="M11 1L3 8L11 15M23 1L15 8L23 15" />
            </svg>
          </div>
          <div className="flex h-full flex-1 items-center border-r border-[#e0e0e0] pt-[3px] pl-[6px]">Value</div>
        </div>
        {props.map((p, i) => (
          <div key={i} className={"flex h-[27px] items-center whitespace-nowrap " + (i % 2 ? "bg-[#e8e7e3]" : "bg-white")}>
            <PropLabel p={p} />
            {p.comp ? (
              <div className="ml-[1px] flex h-[26px] items-center bg-[#d9d9d9] pr-[4px] pl-[4px] tracking-[-0.05px] text-[#f5141c]">{p.v}</div>
            ) : (
              <div
                className={
                  "ml-[5px] " +
                  (p.link ? "tracking-[0.05px] text-[#0078d7] underline underline-offset-[4px]" : "") +
                  (p.more ? "w-[164px] overflow-hidden" : "")
                }
              >
                {p.v}
              </div>
            )}
            {p.more && (
              <div className="mr-[4px] ml-auto flex h-[24px] w-[20px] items-center justify-center rounded-[4px] border border-[#cfcfcf] bg-white text-[16px]">
                ...
              </div>
            )}
          </div>
        ))}
      </div>
      <div className="mt-[26px] ml-[11px] h-[935px] w-[4px] rounded-full bg-[#858585]" />
    </div>
    <div className="mt-[10px] ml-[15px] flex items-center">
      <Combo flat className="h-[31px] w-[253px] pt-[1px] pr-[7px] pl-[14px]">
        <Icon n="search" size={24} />
        <span className="mr-auto ml-[6px] text-[#858585]">Search</span>
      </Combo>
      <span className="ml-[10px] pt-[1px]">in</span>
      <Combo className="ml-[9px] h-[31px] w-[123px] pt-[1px] pr-[7px] pl-[5px]">Any</Combo>
    </div>
  </div>
);

/* ---------- taskbar ---------- */

const T = ({ children }) => (
  <svg width="36" height="36" viewBox="0 0 36 36" fill="none" className="shrink-0">
    {children}
  </svg>
);

const apps = [
  [<T><path d="M1 1H17V17H1ZM19 1H35V17H19ZM1 19H17V35H1ZM19 19H35V35H19Z" fill="url(#gWin)" /><defs><linearGradient id="gWin" x1="0" y1="0" x2="36" y2="36" gradientUnits="userSpaceOnUse"><stop stopColor="#3fc8f4" /><stop offset="1" stopColor="#0a6fd0" /></linearGradient></defs></T>],
  [<T><circle cx="16" cy="15" r="12" stroke="#2a2a2a" strokeWidth="3.500" fill="#e6e9ea" /><path d="M24.500 24L33 33" stroke="#2a2a2a" strokeWidth="4" strokeLinecap="round" /></T>],
  [<T><rect x="1" y="10" width="26" height="24" rx="1" fill="#2d2e2d" /><rect x="10" y="1" width="25" height="23" rx="1" fill="#f4f4f4" /><path d="M10 10H27V24H10Z" fill="#b3b3b3" /></T>],
  [<T><path d="M12 7V4Q12 2 14 2H22Q24 2 24 4V7" stroke="#1fbcf0" strokeWidth="2.500" /><path d="M1 7H35V31Q35 35 31 35H5Q1 35 1 31Z" fill="#164f8c" /><path d="M10.500 13H17V20H10.500Z" fill="#f35325" /><path d="M18.500 13H25V20H18.500Z" fill="#81bc06" /><path d="M10.500 21.500H17V28.500H10.500Z" fill="#05a6f0" /><path d="M18.500 21.500H25V28.500H18.500Z" fill="#ffba08" /></T>],
  [<T><path d="M1 4Q1 2 3 2H12L15 6V12H1Z" fill="#dd9a0b" /><path d="M1 9L14 9L17 6H33Q35 6 35 8V32Q35 34 33 34H3Q1 34 1 32Z" fill="#ffcf48" /><path d="M7 34V28Q7 24 11 24H25Q29 24 29 28V34Z" fill="#1277c8" /><path d="M12 29H24" stroke="#0b4c8c" strokeWidth="2" /></T>, 1],
  [<T><defs><linearGradient id="gEdge" x1="2" y1="6" x2="34" y2="20" gradientUnits="userSpaceOnUse"><stop stopColor="#1fa8dc" /><stop offset=".5" stopColor="#35c6b0" /><stop offset="1" stopColor="#66d94f" /></linearGradient></defs><circle cx="18" cy="18" r="17" fill="#0c78c8" /><path d="M1 17Q3 1 18 1Q34 2 35 15Q35 25 25 25Q19 24 21 20Q23 17 21 13Q18 9 12 10Q4 11 1 17Z" fill="url(#gEdge)" /><path d="M14 18Q13 30 32 28Q26 36 17 35Q9 31 9 23Q10 16 16 13Q13 15 14 18Z" fill="#1350a0" /><path d="M21 20Q19 24 25 25Q31 25 33 22L33 27Q26 30 20 27Q16 23 18 18Z" fill="#dadbdc" /></T>, 1],
  [<T><circle cx="19" cy="8" r="6" fill="#7b83eb" /><circle cx="29" cy="9" r="4" fill="#5059c9" /><path d="M10 15H28V26Q27 34 19 34T10 26Z" fill="#7b83eb" /><path d="M28 15H35V24Q34 29 29 29Z" fill="#5059c9" /><rect x="0" y="9" width="18" height="18" rx="2" fill="#444bb0" /><path d="M5 14H13M9 14V23" stroke="#fff" strokeWidth="2.500" /></T>, 1],
  [<T><rect x="1" y="1" width="34" height="33" rx="6" fill="#b30b00" /><path d="M8 27Q18 20 17 9Q16 5 15 9Q16 20 28 24Q29 21 22 21Q13 22 8 27Z" stroke="#fff" strokeWidth="2" /></T>, 1],
  [<T><path d="M3 14L20 3L35 14V30Q35 34 31 34H9Z" fill="#28b5ef" /><path d="M3 14L20 3L28 9L10 24Z" fill="#1683d8" /><path d="M35 15L12 33Q13 34 16 34H31Q35 34 35 30Z" fill="#4fe0f8" /><path d="M28 9L35 14V17L20 27L18 19Z" fill="#103f91" /><rect x="0" y="9" width="18" height="18" rx="2" fill="#0f6cbd" /><circle cx="9" cy="18" r="4.500" stroke="#fff" strokeWidth="2.500" /></T>],
  [<T><rect x="9" y="2" width="25" height="20" fill="#1490df" /><path d="M17 2H26V12H17ZM26 12H34V22H26Z" fill="#28a8ea" /><path d="M9 2H17V12H9Z" fill="#0a5ba8" /><path d="M8 19H35V34H10Z" fill="#1277c8" /><path d="M35 19V34L20 26Z" fill="#50c8f5" /><rect x="0" y="9" width="18" height="18" rx="2" fill="#0f63b0" /><circle cx="9" cy="18" r="4.500" stroke="#fff" strokeWidth="2.500" /></T>],
  [<T><path d="M26 10V1L35 5V31L26 35V26L5 10L1 13L0 11L5 8L15 16Z" fill="#1e8ad6" /><path d="M26 1L0 24V26L4 29L6 29L26 12Z" fill="#0f6fb8" /><path d="M26 35L1 12L5 8L26 25Z" fill="#1e8ad6" /><path d="M26 1L35 5V31L26 35Z" fill="#2fb0f5" /></T>, 1],
  [<T><path d="M3 6Q8 0 16 3Q24 0 31 3Q36 8 31 20Q30 24 34 25Q30 28 25 26V32Q22 37 18 33L17 24Q12 29 8 24Q2 16 3 6Z" fill="#34658f" stroke="#fff" strokeWidth="1.500" /><path d="M12 8Q10 16 12 23M23 6Q27 14 24 24M16 22Q17 14 15 8" stroke="#fff" strokeWidth="1.500" /></T>, 1],
  [<T><rect width="36" height="36" fill="#1c1a1c" /><path d="M18 3a15 15 0 0 0-4.700 29.200V28Q8 29 7.500 25Q11 27 13 25Q7 24 7.500 17Q7.500 14 9.500 12Q9 9 10 8Q13 8.500 14.500 10Q18 9 21.500 10Q23 8.500 26 8Q27 9 26.500 12Q28.500 14 28.500 17Q29 24 22.700 25V32.200A15 15 0 0 0 18 3Z" fill="#fff" /></T>],
  [<T><circle cx="18" cy="18" r="17.500" fill="#1d8eea" /><path d="M6 18H27Q28 14 31 16Q31 18 28 19Q25 27 15 27Q7 27 6 18Z" fill="#fff" /><path d="M8 14H12V17H8ZM13 14H17V17H13ZM18 14H22V17H18ZM13 10H17V13H13ZM18 10H22V13H18ZM18 6H22V9H18Z" fill="#fff" /></T>, 1],
  [<T><path d="M5 3H31V28H35V32H1V28H5Z" fill="#0f62a0" /><rect x="5" y="3" width="26" height="28" fill="#1583cc" /><rect x="9" y="6" width="18" height="26" rx="1" fill="#35bdf0" /><rect x="13" y="5" width="10" height="4" rx="1" fill="#a8ecff" /></T>, 2],
  [<T><path d="M1 10L32 1L34 8L5 15Z" fill="#8a4bd0" /><path d="M2 13H35V30Q35 35 30 35H6Q2 35 2 30Z" fill="#8a62ee" /><path d="M2 13H17V24H2Z" fill="#eaa6f5" /><path d="M17 24H35V30Q35 35 30 35H17Z" fill="#5a3fe8" /></T>, 1],
  [<T><rect x="8" y="2" width="27" height="32" rx="2" fill="#2b7cd3" /><path d="M8 2H35V10H8Z" fill="#41a5ee" /><path d="M8 18H35V26H8Z" fill="#185abd" /><path d="M8 26H35V32Q35 34 33 34H10Q8 34 8 32Z" fill="#103f91" /><rect x="0" y="9" width="18" height="18" rx="2" fill="#185abd" /><path d="M4 13.500L6.500 22.500L9 15L11.500 22.500L14 13.500" stroke="#fff" strokeWidth="2" /></T>, 1],
  [<T><circle cx="17" cy="17.500" r="12.500" stroke="#7fb02c" strokeWidth="7" /><path d="M18 16L34 29V35H28L18 24Z" fill="#589632" stroke="#dadbdc" strokeWidth="1.500" /><path d="M14 13H20L23 20L18 22Z" fill="#f5a623" /></T>, 1],
  [<FmeLogo size={36} />, 3],
];

const AppSlot = ({ icon, state }) => (
  <div className="flex w-[66.12px] shrink-0 flex-col items-center pt-[4px]">
    <div
      className={
        "flex h-[60px] w-[60px] flex-col items-center rounded-[6px] " +
        (state === 2 ? "bg-[#e9aeaa] pt-[12px]" : state === 3 ? "border border-[#d0d0d0] bg-[#ececec] pt-[11px]" : "pt-[12px]")
      }
    >
      {icon}
      {state === 1 && <div className="mt-[6px] h-[5px] w-[9px] rounded-full bg-[#7a7a7a]" />}
      {state === 2 && <div className="mt-[6px] h-[5px] w-[9px] rounded-full bg-[#c42b1c]" />}
      {state === 3 && <div className="mt-[6px] h-[5px] w-[24px] rounded-full bg-[#0078d7]" />}
    </div>
  </div>
);

const Taskbar = () => (
  <div className="flex h-[70px] border-t-2 border-[#b0b0b0] bg-[#dbdbdb]">
    <div className="w-[524px] shrink-0 pt-[8px] pl-[28px]">
      <div className="flex flex-col">
        <div className="z-10 ml-[14px] flex h-[24px] w-[36px] items-center justify-center rounded-full bg-[#f6f6f6] text-[15px]">-9°</div>
        <svg width="38" height="26" viewBox="0 0 38 26" className="mt-[-6px]">
          <path d="M30 0Q38 9 33 17Q27 26 16 24Q7 23 4 14Q14 17 22 11Q27 6 26 0Z" fill="#f39a26" />
        </svg>
      </div>
    </div>
    {apps.map(([ic, st], i) => (
      <AppSlot key={i} icon={ic} state={st} />
    ))}
    <div className="flex flex-1 items-center justify-end pr-[26px] text-[17px] leading-[24px] text-[#111]">
      <Chev dir="up" c="#222" size={17} sw={1.4} />
      <svg width="26" height="24" viewBox="0 0 26 24" fill="none" className="mt-[4px] ml-[27px]">
        <path d="M6 18Q0 18 1 12Q3 8 7 8Q9 2 15 3Q20 4 20 9" fill="#9a9a9a" stroke="#333" strokeWidth="1.500" />
        <circle cx="17" cy="15" r="8" fill="#d9262c" />
        <path d="M14 12L20 18M20 12L14 18" stroke="#fff" strokeWidth="2" />
      </svg>
      <div className="ml-[21px] w-[48px] text-center">FRA<br />CAFR</div>
      <svg width="24" height="20" viewBox="0 0 24 20" fill="none" stroke="#111" strokeWidth="1.700" className="ml-[21px]">
        <path d="M1 7Q12 -4 23 7M4 10.500Q12 2.500 20 10.500M7.500 14Q12 9.500 16.500 14" />
        <circle cx="12" cy="17" r="1.800" fill="#111" />
      </svg>
      <svg width="24" height="20" viewBox="0 0 24 20" fill="none" stroke="#111" strokeWidth="1.500" className="ml-[11px]">
        <path d="M1 7H5L11 2V18L5 13H1ZM15 6L23 14M23 6L15 14" />
      </svg>
      <svg width="26" height="18" viewBox="0 0 26 18" fill="none" stroke="#111" strokeWidth="1.600" className="ml-[12px]">
        <rect x="1" y="1" width="20" height="15" rx="3" />
        <path d="M4 4H12V13H4Z" fill="#111" stroke="none" />
        <path d="M23.500 6V11" strokeWidth="2.500" />
      </svg>
      <div className="ml-[22px] text-right tracking-[0.4px] whitespace-nowrap">20:54<br />2025-02-11</div>
    </div>
  </div>
);

/* ---------- window ---------- */

export default function App() {
  return (
    <div className="flex h-[1534px] w-[2302px] flex-col overflow-hidden bg-[#efefef] font-['Open_Sans','Noto_Sans',sans-serif] text-[17px] leading-[24px] text-black">
      <div className="flex h-[34px] shrink-0 items-center bg-[#f3f3f3] pl-[3px]">
        <FmeLogo size={22} />
        <span className="ml-[10px] tracking-[0.06px] whitespace-pre">*MULTI → NONE (D:\cours\Maîtrise UQAM\intégration et visualisation\labo5\labo5.fmw) - FME Workbench 2024.2</span>
        <svg width="156" height="16" viewBox="0 0 156 16" fill="none" stroke="#111" strokeWidth="1.400" className="mr-[26px] ml-auto">
          <path d="M1 8H16M140 1L154 15M154 1L140 15M73 3Q73 1 75 1H82Q85 1 85 4V11Q85 13 83 13" />
          <rect x="70" y="4" width="11.500" height="11" rx="1.500" />
        </svg>
      </div>
      <div className="flex h-[33px] shrink-0 items-center border-b border-[#ececec] bg-white pt-[1px] pl-[12px]">
        <span className="w-[52px]">File</span>
        <span className="w-[55px]">Edit</span>
        <span className="w-[63px]">View</span>
        <span className="w-[87px] tracking-[-0.2px]">Readers</span>
        <span className="w-[127px] tracking-[-0.33px]">Transformers</span>
        <span className="w-[81px]">Writers</span>
        <span className="w-[56px]">Run</span>
        <span className="w-[65px]">Tools</span>
        <span>Help</span>
      </div>
      <Toolbar />
      <div className="flex h-[1258px] shrink-0">
        <LeftDock />
        <div className="flex w-[1656px] shrink-0 flex-col border-l border-[#a0a0a0] pt-[2px]">
          <Workspace />
          <Preview />
        </div>
        <RightDock />
      </div>
      <div className="flex h-[44px] shrink-0 border-t-2 border-[#8e8e8e] pt-[2px]">
        <div className="h-[39px] w-[770px] border-r border-[#d8d8d8]" />
      </div>
      <Taskbar />
    </div>
  );
}
